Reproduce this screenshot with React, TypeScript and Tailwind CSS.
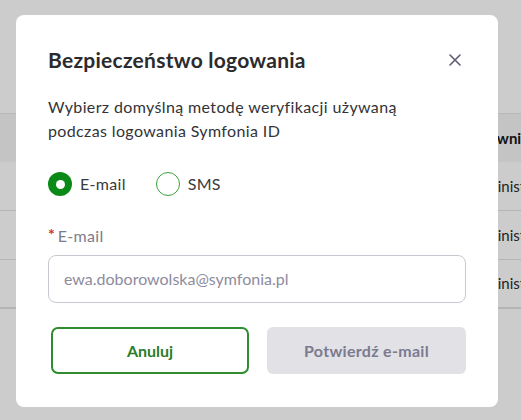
import React from "react";

const font = { fontFamily: "Lato, 'Noto Sans', sans-serif" };

export default function App() {
  return (
    <div className="relative h-[420px] w-[521px] overflow-hidden bg-[#cccccc]" style={font}>
      {/* background page (dimmed) */}
      <div className="pt-[113px]">
        <div className="border-t border-[#b8b8b8] h-[49px] bg-[#c4c4c4] flex items-center">
          <span className="ml-[459px] text-[15px] font-bold text-[#111] whitespace-nowrap">Pracownicy</span>
        </div>
        <div className="h-[49px] border-b border-[#b5b5b5] flex items-center">
          <span className="ml-[467px] text-[15px] text-[#222] whitespace-nowrap">Administrator</span>
        </div>
        <div className="h-[49px] border-b border-[#b5b5b5] flex items-center">
          <span className="ml-[467px] text-[15px] text-[#222] whitespace-nowrap">Administrator</span>
        </div>
        <div className="h-[49px] border-b-2 border-[#b5b5b5] flex items-center">
          <span className="ml-[467px] text-[15px] text-[#222] whitespace-nowrap">Administrator</span>
        </div>
      </div>

      {/* modal */}
      <div className="absolute left-[16px] top-[15px] w-[482px] h-[392px] rounded-[8px] bg-white px-[32px] pt-[32px]">
        <div className="flex items-center justify-between h-[26px]">
          <h2 className="text-[21px] font-bold tracking-[0.25px] text-[#2b2b2e]">Bezpieczeństwo logowania</h2>
          <svg width="14" height="14" viewBox="0 0 14 14" className="mr-[4px]">
            <path d="M2 2 L12 12 M12 2 L2 12" stroke="#5e5c72" strokeWidth="1.6" strokeLinecap="round" />
          </svg>
        </div>
        <p className="mt-[22px] text-[16px] leading-[24px] tracking-[0.37px] text-[#333338] w-[400px]">
          Wybierz domyślną metodę weryfikacji używaną<br />podczas logowania Symfonia ID
        </p>
        <div className="mt-[28px] flex items-center h-[26px]">
          <div className="flex items-center gap-[8px]">
            <span className="w-[24px] h-[24px] rounded-full bg-[#0b8a17] flex items-center justify-center">
              <span className="w-[9px] h-[9px] rounded-full bg-white" />
            </span>
            <span className="text-[16px] tracking-[0.3px] text-[#3a3a40]">E-mail</span>
          </div>
          <div className="flex items-center gap-[8px] ml-[30px]">
            <span className="w-[24px] h-[24px] rounded-full border border-[#3aa53a]" />
            <span className="text-[16px] tracking-[0.3px] text-[#3a3a40]">SMS</span>
          </div>
        </div>
        <div className="mt-[29px] flex items-center h-[20px]">
          <span className="text-[#d0312d] text-[16px] font-bold mr-[3px] -mt-[4px]">*</span>
          <span className="text-[16px] tracking-[0.3px] text-[#7c7b8c]">E-mail</span>
        </div>
        <div className="mt-[9px] h-[48px] w-[418px] rounded-[8px] border border-[#c9c8d0] flex items-center px-[15px]">
          <span className="text-[16px] text-[#8d8c9c]">ewa.doborowolska@symfonia.pl</span>
        </div>
        <div className="mt-[24px] flex gap-[18px] pl-[3px]">
          <button className="w-[198px] h-[47px] rounded-[7px] border-2 border-[#2f8c2f] text-[#2b7d2b] text-[16px] font-bold">
            Anuluj
          </button>
          <button className="w-[199px] h-[47px] rounded-[6px] bg-[#e1e1e6] text-[#7b7a8f] text-[16px] font-bold tracking-[0.3px]">
            Potwierdź e-mail
          </button>
        </div>
      </div>
    </div>
  );
}
